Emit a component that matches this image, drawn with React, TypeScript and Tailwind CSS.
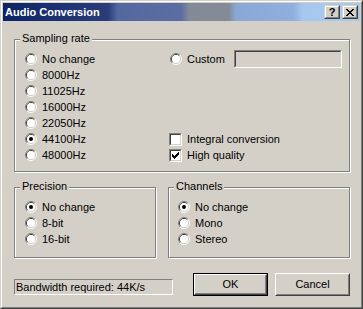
import React from "react";

function Radio({ checked = false }: { checked?: boolean }) {
  return (
    <svg width="12" height="12" viewBox="0 0 12 12" className="shrink-0">
      <path d="M2.11 9.89A5.5 5.5 0 0 1 9.89 2.11" stroke="#808080" fill="none" />
      <path d="M9.89 2.11A5.5 5.5 0 0 1 2.11 9.89" stroke="#ffffff" fill="none" />
      <path d="M2.82 9.18A4.5 4.5 0 0 1 9.18 2.82" stroke="#404040" fill="none" />
      <path d="M9.18 2.82A4.5 4.5 0 0 1 2.82 9.18" stroke="#d4d0c8" fill="none" />
      <circle cx="6" cy="6" r="4" fill="#ffffff" />
      {checked && <circle cx="6" cy="6" r="2" fill="#000000" />}
    </svg>
  );
}

function RadioRow({ label, checked = false }: { label: string; checked?: boolean }) {
  return (
    <div className="flex h-[16px] items-center gap-[5px]">
      <Radio checked={checked} />
      <span className="leading-[13px]">{label}</span>
    </div>
  );
}

function Check({ checked = false }: { checked?: boolean }) {
  const cols = [2, 3, 4, 3, 2, 1, 0];
  return (
    <div className="h-[13px] w-[13px] shrink-0 border border-t-[#808080] border-l-[#808080] border-b-white border-r-white">
      <div className="h-full w-full border border-t-[#404040] border-l-[#404040] border-b-[#d4d0c8] border-r-[#d4d0c8] bg-white">
        {checked && (
          <svg width="9" height="9" viewBox="0 0 9 9" shapeRendering="crispEdges" className="block">
            {cols.map((y, i) => (
              <rect key={i} x={1 + i} y={1 + y} width="1" height="3" fill="#000" />
            ))}
          </svg>
        )}
      </div>
    </div>
  );
}

function CheckRow({ label, checked = false }: { label: string; checked?: boolean }) {
  return (
    <div className="flex h-[16px] items-center gap-[5px]">
      <Check checked={checked} />
      <span className="leading-[13px]">{label}</span>
    </div>
  );
}

function Group({
  label,
  className,
  children,
}: {
  label: string;
  className: string;
  children: React.ReactNode;
}) {
  return (
    <div
      className={
        "relative border border-[#808080] shadow-[inset_1px_1px_0_#ffffff,1px_1px_0_#ffffff] " + className
      }
    >
      <span className="absolute left-[5px] top-[-8px] bg-[#d4d0c8] px-[2px] leading-[13px]">{label}</span>
      {children}
    </div>
  );
}

function CaptionButton({ children }: { children: React.ReactNode }) {
  return (
    <div className="h-[14px] w-[16px] border border-t-[#d4d0c8] border-l-[#d4d0c8] border-b-[#404040] border-r-[#404040]">
      <div className="flex h-full w-full items-center justify-center border border-t-white border-l-white border-b-[#808080] border-r-[#808080] bg-[#d4d0c8]">
        {children}
      </div>
    </div>
  );
}

function CloseGlyph() {
  const px: [number, number][] = [
    [0, 0], [1, 0], [6, 0], [7, 0],
    [1, 1], [2, 1], [5, 1], [6, 1],
    [2, 2], [3, 2], [4, 2], [5, 2],
    [3, 3], [4, 3],
    [2, 4], [3, 4], [4, 4], [5, 4],
    [1, 5], [2, 5], [5, 5], [6, 5],
    [0, 6], [1, 6], [6, 6], [7, 6],
  ];
  return (
    <svg width="8" height="7" viewBox="0 0 8 7" shapeRendering="crispEdges" className="block">
      {px.map(([x, y], i) => (
        <rect key={i} x={x} y={y} width="1" height="1" fill="#000" />
      ))}
    </svg>
  );
}

export default function App() {
  return (
    <div className="h-[309px] w-[363px] border border-t-[#d4d0c8] border-l-[#d4d0c8] border-r-[#404040] border-b-[#404040] bg-[#d4d0c8] font-['Liberation_Sans',Arial,sans-serif] text-[11px] text-black">
      <div className="flex h-full flex-col border border-t-white border-l-white border-r-[#808080] border-b-[#808080] p-px">
        {/* Title bar */}
        <div className="flex h-[18px] shrink-0 items-center bg-[linear-gradient(to_right,#0c2466_0px,#2a3d7b_105px,#5468a0_115px,#5a6ea3_178px,#828a96_186px,#848b97_226px,#8aa8d6_233px,#90afdc_290px,#a6c8f0_300px,#a8caf0_100%)] pl-[2px] pr-[2px]">
          <span className="text-[11px] font-bold leading-[13px] text-white">Audio Conversion</span>
          <div className="ml-auto flex gap-[2px]">
            <CaptionButton>
              <span className="text-[11px] font-bold leading-[10px]">?</span>
            </CaptionButton>
            <CaptionButton>
              <CloseGlyph />
            </CaptionButton>
          </div>
        </div>

        {/* Content */}
        <div className="flex flex-1 flex-col pl-[11px] pr-[10px] pt-[18px]">
          <Group label="Sampling rate" className="flex h-[133px] pl-[10px] pr-[7px] pt-[11px]">
            <div className="flex w-[144px] flex-col">
              <RadioRow label="No change" />
              <RadioRow label="8000Hz" />
              <RadioRow label="11025Hz" />
              <RadioRow label="16000Hz" />
              <RadioRow label="22050Hz" />
              <RadioRow label="44100Hz" checked />
              <RadioRow label="48000Hz" />
            </div>
            <div className="flex w-[173px] flex-col">
              <div className="flex h-[16px] items-center">
                <div className="flex items-center gap-[5px] pl-px">
                  <Radio />
                  <span className="leading-[13px]">Custom</span>
                </div>
                <div className="ml-auto h-[18px] w-[108px] border border-t-[#808080] border-l-[#808080] border-b-white border-r-white">
                  <div className="h-full w-full border border-t-[#404040] border-l-[#404040] border-b-[#d4d0c8] border-r-[#d4d0c8] bg-[#d4d0c8]" />
                </div>
              </div>
              <div className="h-[64px]" />
              <CheckRow label="Integral conversion" />
              <CheckRow label="High quality" checked />
            </div>
          </Group>

          <div className="mt-[15px] flex">
            <Group label="Precision" className="h-[71px] w-[142px] pl-[10px] pt-[11px]">
              <RadioRow label="No change" checked />
              <RadioRow label="8-bit" />
              <RadioRow label="16-bit" />
            </Group>
            <Group label="Channels" className="ml-[12px] h-[71px] flex-1 pl-[9px] pt-[11px]">
              <RadioRow label="No change" checked />
              <RadioRow label="Mono" />
              <RadioRow label="Stereo" />
            </Group>
          </div>

          <div className="mt-[15px] flex h-[23px] items-end">
            <div className="mb-px flex h-[16px] w-[159px] items-center border border-t-[#808080] border-l-[#808080] border-b-white border-r-white pl-px">
              <span className="leading-[13px]">Bandwidth required: 44K/s</span>
            </div>
            <div className="ml-auto h-[23px] w-[75px] border border-black">
              <div className="h-full w-full border border-t-white border-l-white border-b-[#404040] border-r-[#404040]">
                <div className="flex h-full w-full items-center justify-center border border-t-[#d4d0c8] border-l-[#d4d0c8] border-b-[#808080] border-r-[#808080]">
                  <span className="leading-[13px]">OK</span>
                </div>
              </div>
            </div>
            <div className="ml-[7px] h-[23px] w-[75px] border border-t-white border-l-white border-b-[#404040] border-r-[#404040]">
              <div className="flex h-full w-full items-center justify-center border border-t-[#d4d0c8] border-l-[#d4d0c8] border-b-[#808080] border-r-[#808080]">
                <span className="leading-[13px]">Cancel</span>
              </div>
            </div>
          </div>
        </div>
      </div>
    </div>
  );
}
